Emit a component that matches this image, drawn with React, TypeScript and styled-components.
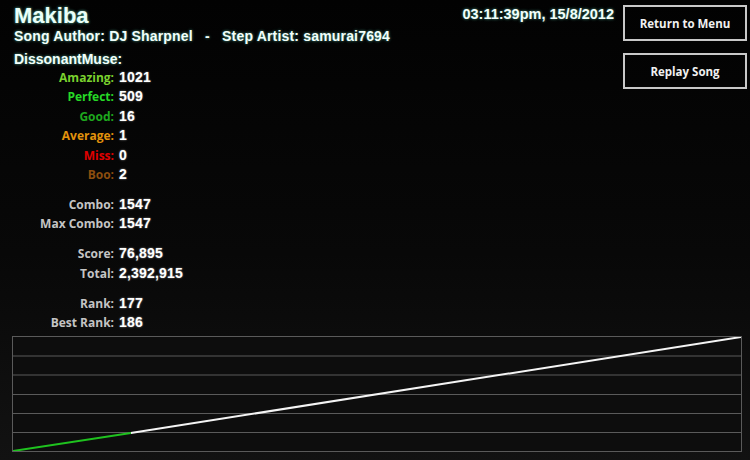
import React from "react";
import { createGlobalStyle, styled } from "styled-components";

const GlobalStyle = createGlobalStyle`
  html, body {
    margin: 0;
    padding: 0;
    background: #050505;
  }
  body {
    width: 750px;
    height: 460px;
    overflow: hidden;
  }
`;

const Screen = styled.div`
  width: 750px;
  height: 460px;
  box-sizing: border-box;
  background: linear-gradient(180deg, #020202 0%, #080808 55%, #121212 100%);
  display: flex;
  flex-direction: column;
  padding: 4px 3px 0 12px;
  color: #fff;
  font-family: "Liberation Sans", Arial, sans-serif;
`;

const Top = styled.div`
  display: flex;
  justify-content: space-between;
  align-items: flex-start;
`;

const Info = styled.div`
  display: flex;
  flex-direction: column;
  padding-left: 2px;
`;

const Title = styled.div`
  font-size: 22px;
  font-weight: bold;
  line-height: 24px;
  color: #eafff9;
  text-shadow: 0 0 3px rgba(120, 255, 220, 0.75);
`;

const Credits = styled.div`
  font-size: 14px;
  font-weight: bold;
  line-height: 16px;
  letter-spacing: 0.18px;
  white-space: pre;
  color: #f2fffb;
  text-shadow: 0 0 3px rgba(120, 255, 220, 0.6);
`;

const Player = styled(Credits)`
  margin-top: 7px;
  letter-spacing: 0;
`;

const Side = styled.div`
  display: flex;
  gap: 9px;
  align-items: flex-start;
`;

const Stamp = styled.div`
  font-size: 14.5px;
  font-weight: bold;
  line-height: 18px;
  margin-top: 1px;
  color: #f2fffb;
  text-shadow: 0 0 3px rgba(120, 255, 220, 0.6);
`;

const Buttons = styled.div`
  display: flex;
  flex-direction: column;
  gap: 12px;
  padding-top: 1px;
`;

const Button = styled.button`
  width: 124px;
  height: 36px;
  box-sizing: border-box;
  background: transparent;
  border: 2px solid #c8c8c8;
  color: #f0f0f0;
  font-family: "Open Sans", sans-serif;
  font-size: 11.5px;
  font-weight: 700;
  padding: 0;
  cursor: pointer;
`;

const Stats = styled.div`
  display: grid;
  grid-template-columns: 100px auto;
  column-gap: 5px;
  margin-top: 1px;
`;

const Label = styled.div<{ $tone: string; $gap?: number }>`
  text-align: right;
  font-family: "Open Sans", sans-serif;
  font-size: 12px;
  font-weight: 700;
  line-height: 19.4px;
  color: ${(p) => p.$tone};
  margin-top: ${(p) => p.$gap ?? 0}px;
`;

const Value = styled.div<{ $gap?: number }>`
  font-size: 14px;
  font-weight: bold;
  line-height: 19.4px;
  letter-spacing: 0.2px;
  color: #fff;
  text-shadow: 0 0 2px rgba(255, 255, 255, 0.55);
  margin-top: ${(p) => p.$gap ?? 0}px;
`;

const Chart = styled.div`
  margin: 4px 5px 0 0;
  height: 114px;
  border: 1px solid #5a5a5a;
  background: #0d0d0d;
`;

const rows: { label: string; value: string; tone: string; gap?: number }[] = [
  { label: "Amazing:", value: "1021", tone: "#7ad12e" },
  { label: "Perfect:", value: "509", tone: "#26d926" },
  { label: "Good:", value: "16", tone: "#1ea81e" },
  { label: "Average:", value: "1", tone: "#e2920c" },
  { label: "Miss:", value: "0", tone: "#e00000" },
  { label: "Boo:", value: "2", tone: "#8c4d0e" },
  { label: "Combo:", value: "1547", tone: "#c4c4c4", gap: 10.5 },
  { label: "Max Combo:", value: "1547", tone: "#c4c4c4" },
  { label: "Score:", value: "76,895", tone: "#c4c4c4", gap: 10.5 },
  { label: "Total:", value: "2,392,915", tone: "#c4c4c4" },
  { label: "Rank:", value: "177", tone: "#c4c4c4", gap: 10.5 },
  { label: "Best Rank:", value: "186", tone: "#c4c4c4" },
];

const ScoreGraph = () => (
  <svg width="100%" height="100%" viewBox="0 0 729 114" preserveAspectRatio="none">
    {[19, 38, 57.5, 76.5, 95.5].map((y) => (
      <line key={y} x1="0" x2="729" y1={y} y2={y} stroke="#5a5a5a" strokeWidth="1.2" />
    ))}
    <polyline points="118,96 729,0" fill="none" stroke="#f4f4f4" strokeWidth="2" />
    <polyline points="0,114 118,96" fill="none" stroke="#1fc21f" strokeWidth="2" />
  </svg>
);

const App = () => {
  return (
    <React.Fragment>
      <GlobalStyle />
      <Screen>
        <Top>
          <Info>
            <Title>Makiba</Title>
            <Credits>Song Author: DJ Sharpnel   -   Step Artist: samurai7694</Credits>
            <Player>DissonantMuse:</Player>
            <Stats>
              {rows.map((r) => (
                <React.Fragment key={r.label}>
                  <Label $tone={r.tone} $gap={r.gap}>
                    {r.label}
                  </Label>
                  <Value $gap={r.gap}>{r.value}</Value>
                </React.Fragment>
              ))}
            </Stats>
          </Info>
          <Side>
            <Stamp>03:11:39pm, 15/8/2012</Stamp>
            <Buttons>
              <Button>Return to Menu</Button>
              <Button>Replay Song</Button>
            </Buttons>
          </Side>
        </Top>
        <Chart>
          <ScoreGraph />
        </Chart>
      </Screen>
    </React.Fragment>
  );
};

export default App;
